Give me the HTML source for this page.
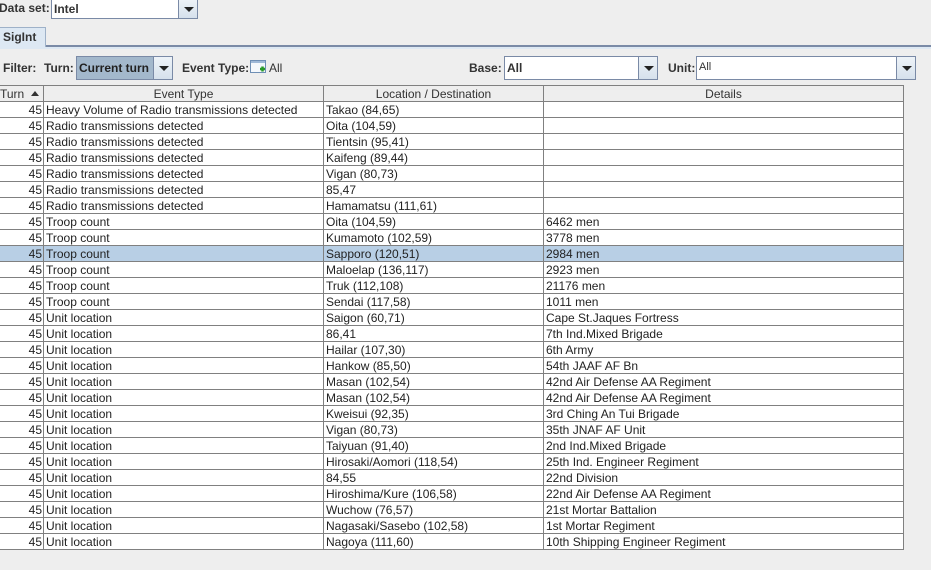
<!DOCTYPE html>
<html><head><meta charset="utf-8"><style>
*{margin:0;padding:0;box-sizing:border-box}
body{width:931px;height:570px;background:#eeeeee;font-family:"Liberation Sans",Arial,sans-serif;font-size:12px;color:#333;position:relative;overflow:hidden}
.a{position:absolute;white-space:nowrap}
.b{font-weight:bold;color:#333}
.combo{position:absolute;border:1px solid #7a8aa6;background:#fff}
.arrow{position:absolute;top:0;right:0;bottom:0;width:19px;border-left:1px solid #7a8aa6;background:linear-gradient(#eef3f8,#d6e1ec)}
.arrow:after{content:"";position:absolute;left:5px;top:50%;margin-top:-2px;border-left:5px solid transparent;border-right:5px solid transparent;border-top:5px solid #222}
.hd{position:absolute;top:85px;height:17px;border-top:1px solid #808080;border-bottom:1px solid #808080;border-right:1px solid #808080;background:#eeeeee;text-align:center;line-height:17px;color:#333}
.row{position:absolute;left:0;width:904px;height:16px;background:#fff;border-bottom:1px solid #808080;border-right:1px solid #808080}
.row div{position:absolute;top:0;height:15px;line-height:17px;border-right:1px solid #808080;padding-left:2px;white-space:nowrap;color:#222}
.row .t{left:0;width:44px;text-align:right;padding-right:1px}
.row .e{left:44px;width:280px}
.row .l{left:324px;width:220px}
.row .d{left:544px;width:359px;border-right:none}
.sel{background:#b8cfe5}
</style></head><body>
<div class="a b" style="left:-1px;top:1px">Data set:</div>
<div class="combo" style="left:51px;top:-2px;width:147px;height:21px"><span class="a b" style="left:2px;top:3px">Intel</span><div class="arrow"></div></div>

<div class="a" style="left:0;top:27px;width:46px;height:20px;background:#dde8f3;border:1px solid #9eb1c8;border-left:none;border-bottom:none"></div>
<div class="a b" style="left:3px;top:30px">SigInt</div>
<div class="a" style="left:46px;top:45px;width:885px;height:2px;background:#7a8aa6"></div>
<div class="a" style="left:0;top:47px;width:931px;height:2px;background:#dde8f3"></div>

<div class="a b" style="left:3px;top:61px">Filter:</div>
<div class="a b" style="left:44px;top:61px">Turn:</div>
<div class="combo" style="left:76px;top:56px;width:97px;height:24px;background:#a3b8cc"><span class="a b" style="left:2px;top:4px;color:#222">Current turn</span><div class="arrow"></div></div>
<div class="a b" style="left:182px;top:61px">Event Type:</div>
<svg class="a" style="left:250px;top:60px" width="18" height="15" viewBox="0 0 18 15"><rect x="0.5" y="0.5" width="15" height="12" fill="#f4f8fc" stroke="#6f8fb5"/><rect x="1" y="1" width="14" height="2" fill="#9fb9d8"/><path d="M10 9h5M12.5 6.5v5" stroke="#2a9a2a" stroke-width="2.5"/></svg>
<div class="a" style="left:269px;top:61px">All</div>
<div class="a b" style="left:469px;top:61px">Base:</div>
<div class="combo" style="left:504px;top:56px;width:154px;height:24px"><span class="a b" style="left:2px;top:4px">All</span><div class="arrow"></div></div>
<div class="a b" style="left:668px;top:61px">Unit:</div>
<div class="combo" style="left:696px;top:56px;width:220px;height:24px"><span class="a" style="left:2px;top:4px;font-size:11px">All</span><div class="arrow"></div></div>

<div class="hd" style="left:-2px;width:46px;text-align:left;padding-left:2px;line-height:16px">Turn <span style="display:inline-block;border-left:4px solid transparent;border-right:4px solid transparent;border-bottom:5px solid #333;vertical-align:2px;margin-left:3px"></span></div>
<div class="hd" style="left:44px;width:280px">Event Type</div>
<div class="hd" style="left:324px;width:220px">Location / Destination</div>
<div class="hd" style="left:544px;width:360px">Details</div>

<div class="row" style="top:102px"><div class="t">45</div><div class="e">Heavy Volume of Radio transmissions detected</div><div class="l">Takao (84,65)</div><div class="d"></div></div>
<div class="row" style="top:118px"><div class="t">45</div><div class="e">Radio transmissions detected</div><div class="l">Oita (104,59)</div><div class="d"></div></div>
<div class="row" style="top:134px"><div class="t">45</div><div class="e">Radio transmissions detected</div><div class="l">Tientsin (95,41)</div><div class="d"></div></div>
<div class="row" style="top:150px"><div class="t">45</div><div class="e">Radio transmissions detected</div><div class="l">Kaifeng (89,44)</div><div class="d"></div></div>
<div class="row" style="top:166px"><div class="t">45</div><div class="e">Radio transmissions detected</div><div class="l">Vigan (80,73)</div><div class="d"></div></div>
<div class="row" style="top:182px"><div class="t">45</div><div class="e">Radio transmissions detected</div><div class="l">85,47</div><div class="d"></div></div>
<div class="row" style="top:198px"><div class="t">45</div><div class="e">Radio transmissions detected</div><div class="l">Hamamatsu (111,61)</div><div class="d"></div></div>
<div class="row" style="top:214px"><div class="t">45</div><div class="e">Troop count</div><div class="l">Oita (104,59)</div><div class="d">6462 men</div></div>
<div class="row" style="top:230px"><div class="t">45</div><div class="e">Troop count</div><div class="l">Kumamoto (102,59)</div><div class="d">3778 men</div></div>
<div class="row sel" style="top:246px"><div class="t">45</div><div class="e">Troop count</div><div class="l">Sapporo (120,51)</div><div class="d">2984 men</div></div>
<div class="row" style="top:262px"><div class="t">45</div><div class="e">Troop count</div><div class="l">Maloelap (136,117)</div><div class="d">2923 men</div></div>
<div class="row" style="top:278px"><div class="t">45</div><div class="e">Troop count</div><div class="l">Truk (112,108)</div><div class="d">21176 men</div></div>
<div class="row" style="top:294px"><div class="t">45</div><div class="e">Troop count</div><div class="l">Sendai (117,58)</div><div class="d">1011 men</div></div>
<div class="row" style="top:310px"><div class="t">45</div><div class="e">Unit location</div><div class="l">Saigon (60,71)</div><div class="d">Cape St.Jaques Fortress</div></div>
<div class="row" style="top:326px"><div class="t">45</div><div class="e">Unit location</div><div class="l">86,41</div><div class="d">7th Ind.Mixed Brigade</div></div>
<div class="row" style="top:342px"><div class="t">45</div><div class="e">Unit location</div><div class="l">Hailar (107,30)</div><div class="d">6th Army</div></div>
<div class="row" style="top:358px"><div class="t">45</div><div class="e">Unit location</div><div class="l">Hankow (85,50)</div><div class="d">54th JAAF AF Bn</div></div>
<div class="row" style="top:374px"><div class="t">45</div><div class="e">Unit location</div><div class="l">Masan (102,54)</div><div class="d">42nd Air Defense AA Regiment</div></div>
<div class="row" style="top:390px"><div class="t">45</div><div class="e">Unit location</div><div class="l">Masan (102,54)</div><div class="d">42nd Air Defense AA Regiment</div></div>
<div class="row" style="top:406px"><div class="t">45</div><div class="e">Unit location</div><div class="l">Kweisui (92,35)</div><div class="d">3rd Ching An Tui Brigade</div></div>
<div class="row" style="top:422px"><div class="t">45</div><div class="e">Unit location</div><div class="l">Vigan (80,73)</div><div class="d">35th JNAF AF Unit</div></div>
<div class="row" style="top:438px"><div class="t">45</div><div class="e">Unit location</div><div class="l">Taiyuan (91,40)</div><div class="d">2nd Ind.Mixed Brigade</div></div>
<div class="row" style="top:454px"><div class="t">45</div><div class="e">Unit location</div><div class="l">Hirosaki/Aomori (118,54)</div><div class="d">25th Ind. Engineer Regiment</div></div>
<div class="row" style="top:470px"><div class="t">45</div><div class="e">Unit location</div><div class="l">84,55</div><div class="d">22nd Division</div></div>
<div class="row" style="top:486px"><div class="t">45</div><div class="e">Unit location</div><div class="l">Hiroshima/Kure (106,58)</div><div class="d">22nd Air Defense AA Regiment</div></div>
<div class="row" style="top:502px"><div class="t">45</div><div class="e">Unit location</div><div class="l">Wuchow (76,57)</div><div class="d">21st Mortar Battalion</div></div>
<div class="row" style="top:518px"><div class="t">45</div><div class="e">Unit location</div><div class="l">Nagasaki/Sasebo (102,58)</div><div class="d">1st Mortar Regiment</div></div>
<div class="row" style="top:534px"><div class="t">45</div><div class="e">Unit location</div><div class="l">Nagoya (111,60)</div><div class="d">10th Shipping Engineer Regiment</div></div>
</body></html>
